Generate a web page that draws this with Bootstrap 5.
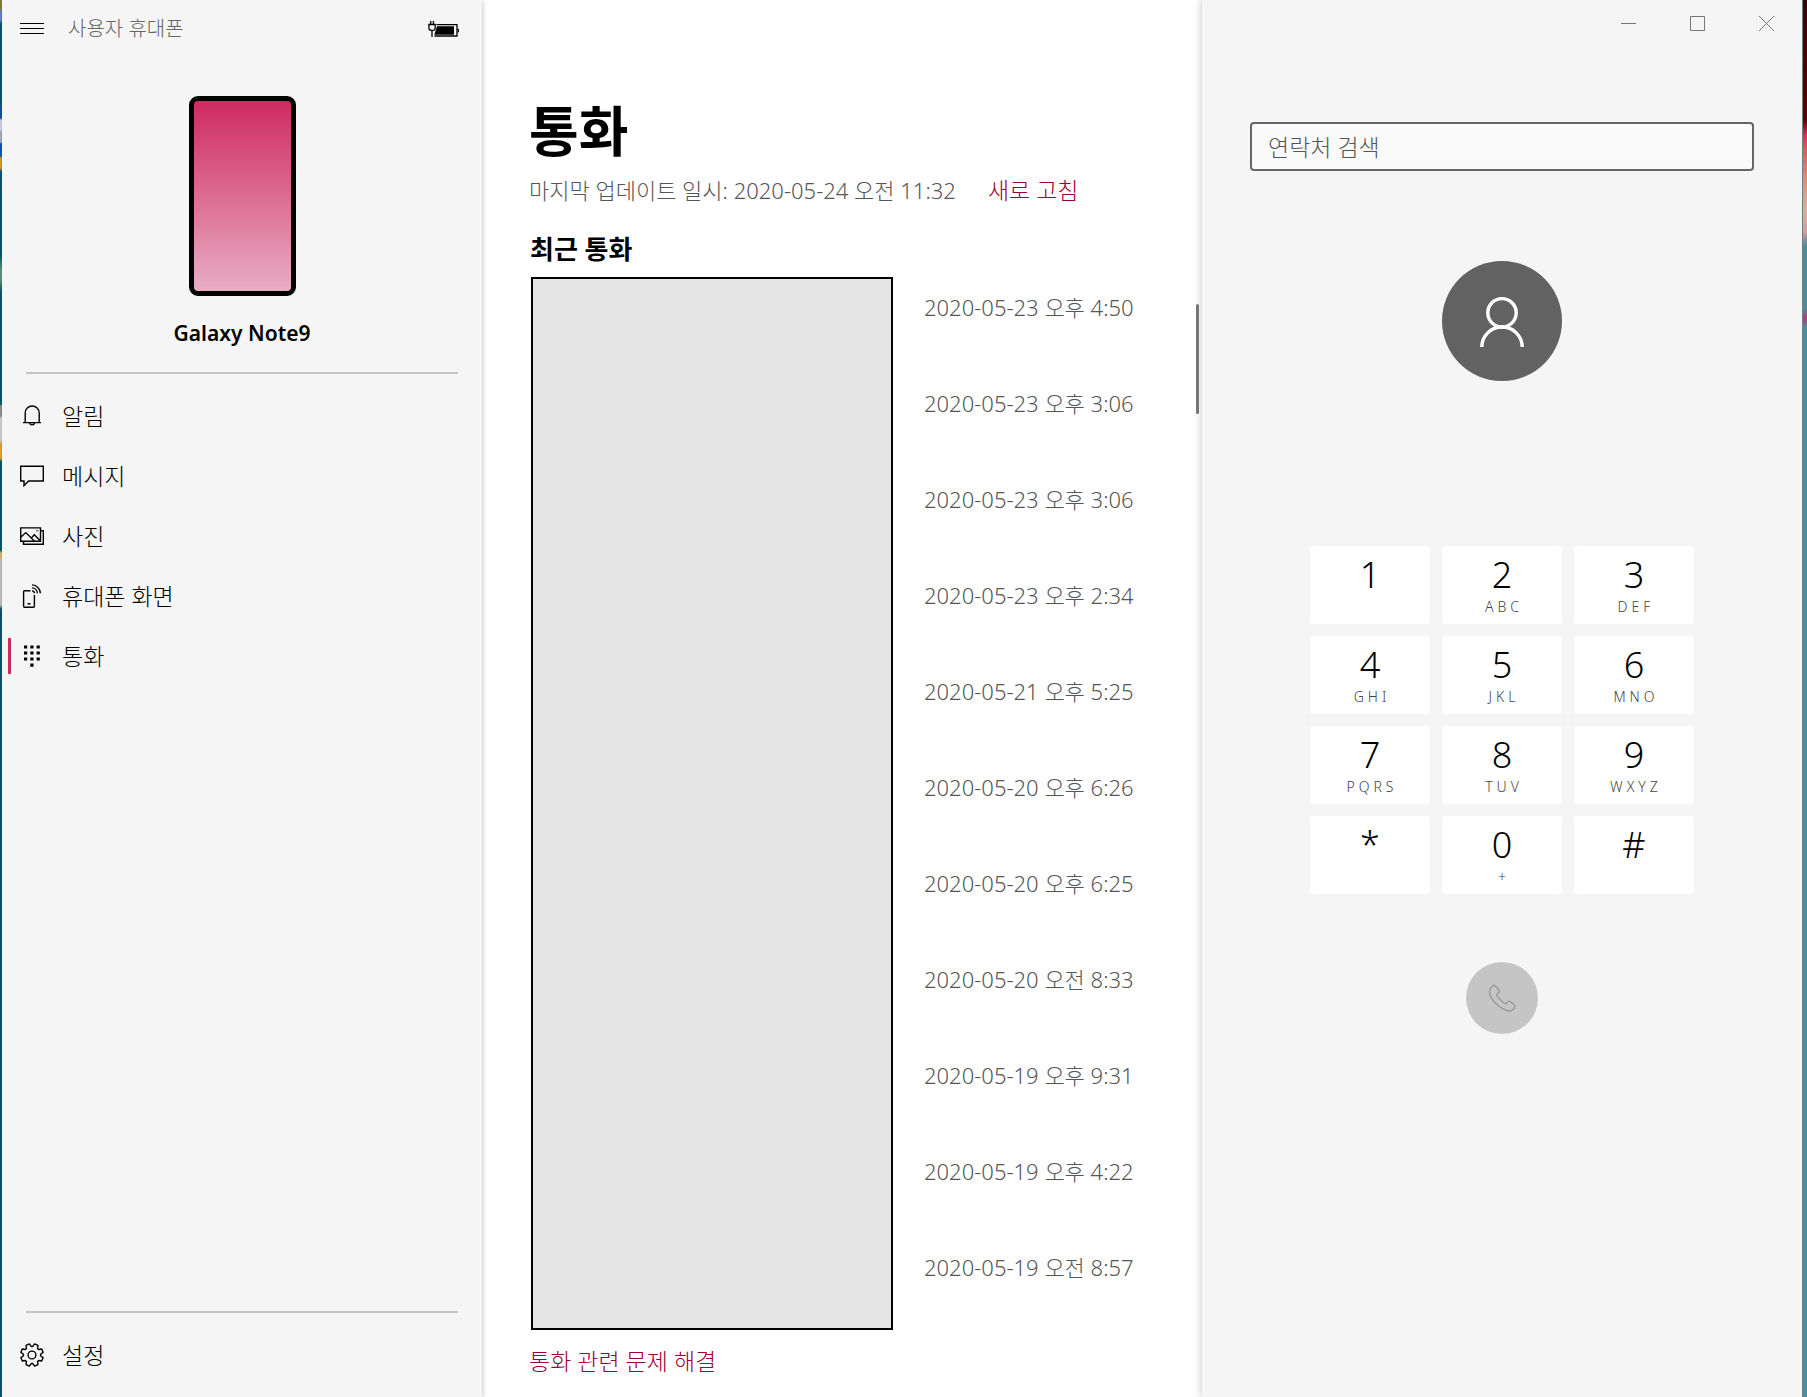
<!DOCTYPE html>
<html lang="ko">
<head>
<meta charset="utf-8">
<meta name="viewport" content="width=device-width, initial-scale=1">
<title>사용자 휴대폰</title>
<link rel="stylesheet" href="https://cdn.jsdelivr.net/npm/bootstrap@5.3.0/dist/css/bootstrap.min.css">
<style>
  body {
    font-family: "Noto Sans", "Noto Sans CJK KR", sans-serif;
    font-size: 22px;
    line-height: 30px;
    font-weight: 300;
    color: #000;
    background: #fff;
  }
  svg { display: block; fill: none; stroke: currentColor; }
  a { text-decoration: none; }
  .edge-left {
    width: 2px;
    background: linear-gradient(#8a8a30 0 8px, #6f86d8 12px 20px, #04616f 24px 104px, #0a5ab4 106px 118px, #dde 120px 130px, #aab8c8 132px 142px, #0a5fc0 144px 156px, #e8a020 158px 168px, #0a50a0 172px, #04616f 185px 255px, #6a9a80 270px 280px, #04616f 292px 404px, #999 406px 416px, #ddd 418px 440px, #e8b030 444px 458px, #04616f 462px 550px, #e0c870 553px 558px, #ccc 560px 605px, #04616f 609px);
  }
  .edge-right {
    width: 5px;
    background: linear-gradient(#3c0008, #5e0000 120px, #e03060 136px, #d06060 150px, #e09070 180px, #d8b0a0 210px, #d89aa4 232px, #4a8c98 246px 308px, #b83a80 318px, #4a8f9c 328px);
    border-left: 1px solid #6f7f84;
  }
  .side-pane { width: 480px; background: #f5f5f5; padding: 14px 24px 12px 18px; }
  .main-pane { min-width: 0; padding: 95px 0 20px 47px; }
  .dial-pane { width: 600px; background: #f5f5f5; box-shadow: 0 0 8px rgba(0,0,0,.25); padding: 0 48px; }
  .side-shadow { box-shadow: 0 0 5px rgba(0,0,0,.3); z-index: 1; }

  .app-name { font-size: 20px; color: #666; }
  .icon-btn { background: none; border: 0; padding: 0; color: #000; }
  .battery { margin-right: -2px; }
  .device { padding-left: 6px; }
  .phone-art {
    width: 107px; height: 200px;
    border: 5px solid #000; border-radius: 9px;
    background: linear-gradient(#ce2a61, #e9adc3);
    margin: 52px auto 22px;
  }
  .phone-name { font-size: 21px; font-weight: 600; margin-bottom: 24px; }
  .rule-line { height: 2px; background: #c4c4c4; margin-left: 6px; }
  .side-link { position: relative; height: 60px; color: #000; font-size: 23px; gap: 18px; }
  .side-link.active::before {
    content: ""; position: absolute; left: -12px; top: 12px;
    width: 3px; height: 36px; background: #cf2b62;
  }

  .page-title { font-size: 54px; line-height: 72px; font-weight: 700; margin: 0; }
  .subtle { color: #555; }
  .accent { color: #9c0038; font-size: 23px; }
  .section-title { font-size: 26px; line-height: 36px; font-weight: 700; margin: 26px 0 10px; padding-left: 1px; }
  .calls { padding-left: 2px; gap: 31px; }
  .caller-box { width: 362px; background: #e5e5e5; border: 2px solid #000; }
  .call-times { gap: 66px; padding: 15px 0 48px; margin: 0; }
  .scroll-thumb { position: absolute; right: 3px; top: 304px; width: 3px; height: 110px; border-radius: 2px; background: #777; z-index: 2; }

  .window-bar { gap: 54px; height: 47px; margin-right: -20px; color: #767676; }
  .search-box {
    height: 49px; margin-top: 75px; padding: 0 16px;
    font-size: 23px; font-weight: 300;
    border: 2px solid #666; border-radius: 4px; background: #fafafa;
  }
  .search-box::placeholder { color: #555; opacity: 1; }
  .avatar { width: 120px; height: 120px; background: #626262; color: #fff; margin: 90px auto 165px; }
  .keypad { display: grid; grid-template-columns: repeat(3, 120px); gap: 12px; justify-content: center; }
  .key { height: 78px; border: 0; border-radius: 3px; background: #fff; padding: 7px 0 0; color: #000; font-weight: 300; }
  .key-num { font-size: 36px; line-height: 44px; }
  .key-sub { font-size: 14px; line-height: 20px; color: #444; letter-spacing: 4px; padding-left: 4px; }
  .call-btn { width: 72px; height: 72px; border: 0; background: #c5c5c5; color: #999; margin: 68px auto 0; }
</style>
</head>
<body>
<div class="d-flex min-vh-100">
  <div class="edge-left flex-shrink-0"></div>

  <aside class="side-pane side-shadow d-flex flex-column flex-shrink-0">
    <header class="d-flex align-items-center">
      <button class="icon-btn" type="button" aria-label="메뉴">
        <svg width="24" height="12" viewBox="0 0 24 12" stroke-width="1"><path d="M0 .5H24M0 5.5H24M0 10.5H24"/></svg>
      </button>
      <span class="app-name ms-4">사용자 휴대폰</span>
      <svg class="battery ms-auto" width="32" height="18" viewBox="0 0 32 18" stroke-width="1.3" role="img" aria-label="충전 중">
        <path d="M8.5 4.7H29V16H6.5"/><path d="M6.3 14.7L9 6.3H26V14.7Z" fill="currentColor" stroke="none"/>
        <path d="M30.3 8.7V12.3M2.7 1V4.3M5.4 1V4.3M.9 4.5H7.2V7.5A3.1 3.1 0 0 1 .9 7.5ZM4 10.5V17"/>
      </svg>
    </header>

    <div class="device">
      <div class="phone-art"></div>
      <div class="phone-name text-center">Galaxy Note9</div>
    </div>
    <div class="rule-line"></div>

    <nav class="nav flex-column mt-2 pt-1">
      <a class="side-link d-flex align-items-center" href="#">
        <svg width="24" height="24" viewBox="0 0 24 24" stroke-width="1.4"><path d="M3 18.6H21M5.2 18.6V9a7 7 0 0 1 14 0v9.6M9.4 18.6a2.8 3 0 0 0 5.4 0"/></svg>알림</a>
      <a class="side-link d-flex align-items-center" href="#">
        <svg width="24" height="24" viewBox="0 0 24 24" stroke-width="1.4"><path d="M.7 2.2H23.3V17H8.7L4 21.6V17H.7Z"/></svg>메시지</a>
      <a class="side-link d-flex align-items-center" href="#">
        <svg width="24" height="24" viewBox="0 0 24 24" stroke-width="1.4"><path d="M.7 3.9H20.5V17.3H.7ZM20.5 6.8H23.3V20.2H3.5V17.3M1 13L5.8 8.6L14.6 17.3M11.3 14L14.3 10.8L20.5 17"/><circle cx="17" cy="6.8" r=".8" fill="currentColor" stroke="none"/></svg>사진</a>
      <a class="side-link d-flex align-items-center" href="#">
        <svg width="24" height="24" viewBox="0 0 24 24" stroke-width="1.4"><path d="M10.5 6.8H4.6Q3.6 6.8 3.6 7.8V22.2Q3.6 23.2 4.6 23.2H13.4Q14.4 23.2 14.4 22.2V11M7.5 19.8H10.5M12 .9A8.6 8.6 0 0 1 20.4 9.3M12 3.9A5.6 5.6 0 0 1 17.4 9.3M12 6.9A2.6 2.6 0 0 1 14.4 9.3"/></svg>휴대폰 화면</a>
      <a class="side-link active d-flex align-items-center" href="#" aria-current="page">
        <svg width="24" height="24" viewBox="0 0 24 24" stroke-width="3.2"><path stroke-dasharray="3.2 3.1" d="M4 3H20M4 9H20M4 15H20M10.3 21.2H13.6"/></svg>통화</a>
    </nav>

    <div class="rule-line mt-auto"></div>
    <nav class="nav flex-column mt-2 pt-1">
      <a class="side-link d-flex align-items-center" href="#">
        <svg width="24" height="24" viewBox="-12 -12 24 24" stroke-width="1.4" stroke-linejoin="round">
          <circle r="3.9"/>
          <path d="M-.75-8.57L.75-8.57L2.66-11.08L5.96-9.72L5.53-6.59L6.59-5.53L9.72-5.96L11.08-2.66L8.57-.75L8.57.75L11.08 2.66L9.72 5.96L6.59 5.53L5.53 6.59L5.96 9.72L2.66 11.08L.75 8.57L-.75 8.57L-2.66 11.08L-5.96 9.72L-5.53 6.59L-6.59 5.53L-9.72 5.96L-11.08 2.66L-8.57.75L-8.57-.75L-11.08-2.66L-9.72-5.96L-6.59-5.53L-5.53-6.59L-5.96-9.72L-2.66-11.08Z"/>
        </svg>설정</a>
    </nav>
  </aside>

  <main class="main-pane flex-grow-1 position-relative">
    <h1 class="page-title">통화</h1>
    <div class="d-flex mt-2">
      <span class="subtle">마지막 업데이트 일시: 2020-05-24 오전 11:32</span>
      <a class="accent ms-4 ps-2" href="#">새로 고침</a>
    </div>
    <h2 class="section-title">최근 통화</h2>
    <div class="calls d-flex">
      <div class="caller-box flex-shrink-0"></div>
      <ul class="call-times list-unstyled d-flex flex-column subtle">
        <li>2020-05-23 오후 4:50</li>
        <li>2020-05-23 오후 3:06</li>
        <li>2020-05-23 오후 3:06</li>
        <li>2020-05-23 오후 2:34</li>
        <li>2020-05-21 오후 5:25</li>
        <li>2020-05-20 오후 6:26</li>
        <li>2020-05-20 오후 6:25</li>
        <li>2020-05-20 오전 8:33</li>
        <li>2020-05-19 오후 9:31</li>
        <li>2020-05-19 오후 4:22</li>
        <li>2020-05-19 오전 8:57</li>
      </ul>
    </div>
    <a class="accent d-inline-block mt-3" href="#">통화 관련 문제 해결</a>
    <div class="scroll-thumb"></div>
  </main>

  <section class="dial-pane flex-shrink-0">
    <div class="window-bar d-flex justify-content-end align-items-center">
      <button class="icon-btn text-reset" type="button" aria-label="최소화"><svg width="15" height="15" viewBox="0 0 15 15"><path d="M0 7.5H15"/></svg></button>
      <button class="icon-btn text-reset" type="button" aria-label="최대화"><svg width="15" height="15" viewBox="0 0 15 15"><path d="M.5.5H14.5V14.5H.5Z"/></svg></button>
      <button class="icon-btn text-reset" type="button" aria-label="닫기"><svg width="15" height="15" viewBox="0 0 15 15"><path d="M0 0L15 15M15 0L0 15"/></svg></button>
    </div>
    <input class="search-box form-control" type="text" placeholder="연락처 검색" aria-label="연락처 검색">
    <div class="avatar rounded-circle">
      <svg width="120" height="120" viewBox="0 0 120 120" stroke-width="3.4"><circle cx="60" cy="51.8" r="14.2"/><path d="M39.8 86A20.2 20 0 0 1 80.2 86"/></svg>
    </div>
    <div class="keypad">
      <button class="key d-flex flex-column align-items-center" type="button"><span class="key-num">1</span></button>
      <button class="key d-flex flex-column align-items-center" type="button"><span class="key-num">2</span><span class="key-sub">ABC</span></button>
      <button class="key d-flex flex-column align-items-center" type="button"><span class="key-num">3</span><span class="key-sub">DEF</span></button>
      <button class="key d-flex flex-column align-items-center" type="button"><span class="key-num">4</span><span class="key-sub">GHI</span></button>
      <button class="key d-flex flex-column align-items-center" type="button"><span class="key-num">5</span><span class="key-sub">JKL</span></button>
      <button class="key d-flex flex-column align-items-center" type="button"><span class="key-num">6</span><span class="key-sub">MNO</span></button>
      <button class="key d-flex flex-column align-items-center" type="button"><span class="key-num">7</span><span class="key-sub">PQRS</span></button>
      <button class="key d-flex flex-column align-items-center" type="button"><span class="key-num">8</span><span class="key-sub">TUV</span></button>
      <button class="key d-flex flex-column align-items-center" type="button"><span class="key-num">9</span><span class="key-sub">WXYZ</span></button>
      <button class="key d-flex flex-column align-items-center" type="button"><span class="key-num">*</span></button>
      <button class="key d-flex flex-column align-items-center" type="button"><span class="key-num">0</span><span class="key-sub">+</span></button>
      <button class="key d-flex flex-column align-items-center" type="button"><span class="key-num">#</span></button>
    </div>
    <button class="call-btn rounded-circle d-flex align-items-center justify-content-center" type="button" aria-label="전화 걸기">
      <svg width="28" height="28" viewBox="0 0 28 28" stroke-width="1.4"><path d="M1.5 8C1.5 5 4 1.3 6 1.3C7 1.3 8 2.5 11 6C12.5 8 11 8.5 9 10.2C8.3 11 8.8 11.8 10 13L15.5 18.8C16.8 20 17.6 20.3 18.5 19.2C20.5 16.8 21.2 16.5 23 18L26 20.8C27.8 22.5 26.5 24 25 25.5C23.3 27 20 27.3 17 25.8C9 22 1.5 14.5 1.5 8Z"/></svg>
    </button>
  </section>

  <div class="edge-right flex-shrink-0"></div>
</div>
<script src="https://cdn.jsdelivr.net/npm/bootstrap@5.3.0/dist/js/bootstrap.bundle.min.js"></script>
</body>
</html>
